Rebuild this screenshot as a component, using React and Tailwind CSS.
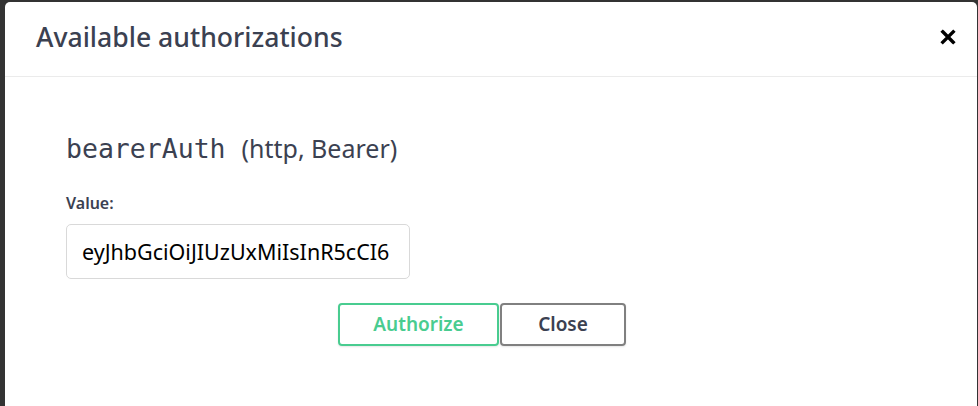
import React, { useState } from 'react';

const App = () => {
  const [token, setToken] = useState('eyJhbGciOiJIUzUxMiIsInR5cCI6');

  return (
    <div className="w-full h-[406px] bg-[#333333] overflow-hidden pl-[5px] pt-[2px] font-['Noto_Sans',sans-serif] text-[#3b4151]">
      <div className="w-[972px] h-[420px] bg-white rounded-tl-[5px] rounded-tr-[5px]">
        {/* Header */}
        <div className="h-[75px] border-b border-[#ebebeb] flex items-center justify-between pl-[31px] pr-[21px] pb-[4px]">
          <h3 className="text-[26.6px] font-medium leading-[34px]">Available authorizations</h3>
          <button type="button" className="w-[16px] h-[16px] flex items-center justify-center">
            <svg width="16" height="16" viewBox="0 0 16 16">
              <path d="M2.8 2.8 L13.2 13.2 M13.2 2.8 L2.8 13.2" stroke="#000" strokeWidth="3.4" strokeLinecap="square" />
            </svg>
          </button>
        </div>

        {/* Body */}
        <div className="pl-[61px] pt-[55px]">
          <h4 className="flex items-baseline leading-[32px]">
            <code className="font-['DejaVu_Sans_Mono',monospace] text-[26.5px]">bearerAuth</code>
            <span className="ml-[16px] text-[25px]">(http, Bearer)</span>
          </h4>

          <label className="block mt-[28px] text-[16px] font-semibold leading-[20px]">Value:</label>
          <input
            value={token}
            onChange={(e) => setToken(e.target.value)}
            className="mt-[11px] w-[344px] h-[55px] border border-[#d9d9d9] rounded-[5px] px-[15px] text-[21.5px] text-black outline-none"
          />

          <div className="mt-[24px] flex pl-[272px]">
            <button
              type="button"
              className="w-[161px] h-[43px] border-2 border-[#49cc90] rounded-[4px] text-[#49cc90] text-[19px] font-semibold shadow-[0_1px_2px_rgba(0,0,0,0.1)]"
            >
              Authorize
            </button>
            <button
              type="button"
              className="w-[126px] h-[43px] ml-[1px] border-2 border-[#808080] rounded-[4px] text-[#3b4151] text-[19px] font-semibold shadow-[0_1px_2px_rgba(0,0,0,0.1)]"
            >
              Close
            </button>
          </div>
        </div>
      </div>
    </div>
  );
};

export default App;
